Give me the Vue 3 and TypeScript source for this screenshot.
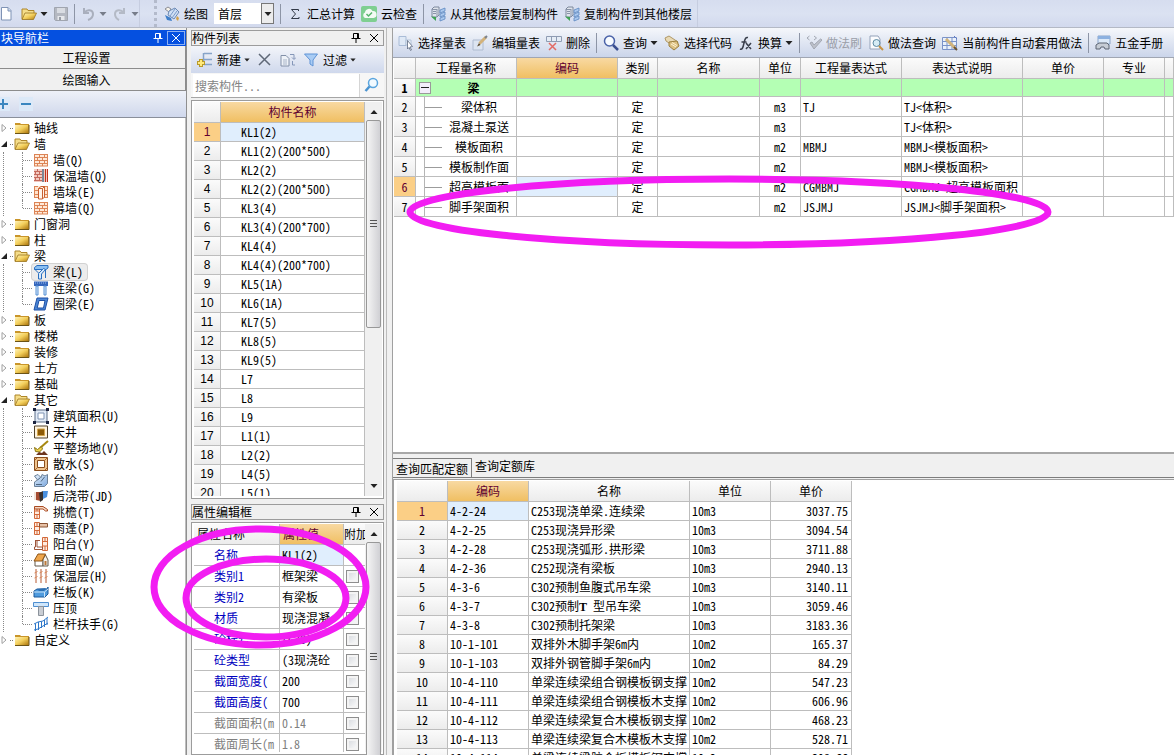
<script setup lang="ts">
import { ref } from 'vue'

interface TreeLeaf { label: string; icon: string; selected?: boolean }
interface TreeGroup { label: string; open?: boolean; children?: TreeLeaf[] }
interface QuantityRow { name: string; kind: string; unit: string; expr: string; note: string; active?: boolean }
interface PropertyRow { name: string; value: string; check: boolean; tone?: string; active?: boolean }

const floor = ref('首层')
const keyword = ref('')

const tree: TreeGroup[] = [
  { label: '轴线' },
  {
    label: '墙', open: true, children: [
      { label: '墙(Q)', icon: 'brick' },
      { label: '保温墙(Q)', icon: 'brick-warm' },
      { label: '墙垛(E)', icon: 'brick-pier' },
      { label: '幕墙(Q)', icon: 'brick' },
    ],
  },
  { label: '门窗洞' },
  { label: '柱' },
  {
    label: '梁', open: true, children: [
      { label: '梁(L)', icon: 'beam', selected: true },
      { label: '连梁(G)', icon: 'beam-link' },
      { label: '圈梁(E)', icon: 'beam-ring' },
    ],
  },
  { label: '板' },
  { label: '楼梯' },
  { label: '装修' },
  { label: '土方' },
  { label: '基础' },
  {
    label: '其它', open: true, children: [
      { label: '建筑面积(U)', icon: 'area' },
      { label: '天井', icon: 'patio' },
      { label: '平整场地(V)', icon: 'shovel' },
      { label: '散水(S)', icon: 'apron' },
      { label: '台阶', icon: 'steps' },
      { label: '后浇带(JD)', icon: 'strip' },
      { label: '挑檐(T)', icon: 'eave' },
      { label: '雨蓬(P)', icon: 'canopy' },
      { label: '阳台(Y)', icon: 'balcony' },
      { label: '屋面(W)', icon: 'roof' },
      { label: '保温层(H)', icon: 'insulate' },
      { label: '栏板(K)', icon: 'panel' },
      { label: '压顶', icon: 'coping' },
      { label: '栏杆扶手(G)', icon: 'rail' },
    ],
  },
  { label: '自定义' },
]

const members: string[] = [
  'KL1(2)', 'KL1(2)(200*500)', 'KL2(2)', 'KL2(2)(200*500)', 'KL3(4)', 'KL3(4)(200*700)', 'KL4(4)',
  'KL4(4)(200*700)', 'KL5(1A)', 'KL6(1A)', 'KL7(5)', 'KL8(5)', 'KL9(5)', 'L7', 'L8', 'L9', 'L1(1)',
  'L2(2)', 'L4(5)', 'L5(1)',
]

const properties: PropertyRow[] = [
  { name: '名称', value: 'KL1(2)', check: false, active: true },
  { name: '类别1', value: '框架梁', check: true },
  { name: '类别2', value: '有梁板', check: true },
  { name: '材质', value: '现浇混凝', check: true },
  { name: '砼标号', value: '(C30)', check: true },
  { name: '砼类型', value: '(3现浇砼', check: true },
  { name: '截面宽度(', value: '200', check: true },
  { name: '截面高度(', value: '700', check: true },
  { name: '截面面积(m', value: '0.14', check: true, tone: 'muted' },
  { name: '截面周长(m', value: '1.8', check: true, tone: 'muted' },
]

const quantities: QuantityRow[] = [
  { name: '梁体积', kind: '定', unit: 'm3', expr: 'TJ', note: 'TJ<体积>' },
  { name: '混凝土泵送', kind: '定', unit: 'm3', expr: '', note: 'TJ<体积>' },
  { name: '模板面积', kind: '定', unit: 'm2', expr: 'MBMJ', note: 'MBMJ<模板面积>' },
  { name: '模板制作面', kind: '定', unit: 'm2', expr: '', note: 'MBMJ<模板面积>' },
  { name: '超高模板面', kind: '定', unit: 'm2', expr: 'CGMBMJ', note: 'CGMBMJ<超高模板面积', active: true },
  { name: '脚手架面积', kind: '定', unit: 'm2', expr: 'JSJMJ', note: 'JSJMJ<脚手架面积>' },
]

const quotas: string[][] = [
  ['4-2-24', 'C253现浇单梁.连续梁', '10m3', '3037.75'],
  ['4-2-25', 'C253现浇异形梁', '10m3', '3094.54'],
  ['4-2-28', 'C253现浇弧形.拱形梁', '10m3', '3711.88'],
  ['4-2-36', 'C252现浇有梁板', '10m3', '2940.13'],
  ['4-3-6', 'C302预制鱼腹式吊车梁', '10m3', '3140.11'],
  ['4-3-7', 'C302预制T 型吊车梁', '10m3', '3059.46'],
  ['4-3-8', 'C302预制托架梁', '10m3', '3183.36'],
  ['10-1-101', '双排外木脚手架6m内', '10m2', '165.37'],
  ['10-1-103', '双排外钢管脚手架6m内', '10m2', '84.29'],
  ['10-4-110', '单梁连续梁组合钢模板钢支撑', '10m2', '547.23'],
  ['10-4-111', '单梁连续梁组合钢模板木支撑', '10m2', '606.96'],
  ['10-4-112', '单梁连续梁复合木模板钢支撑', '10m2', '468.23'],
  ['10-4-113', '单梁连续梁复合木模板木支撑', '10m2', '528.71'],
  ['10-4-114', '单梁连续梁胶合板模板钢支撑', '10m2', '398.66'],
]

const splitSection = (text: string): string[] => text.split(/(T)/)
</script>

<template>
  <div class="app">
    <svg class="symbols" aria-hidden="true">
      <defs>
        <linearGradient id="gFolder" x1="0" y1="0" x2="1" y2="1">
          <stop offset="0" stop-color="#fff3b8" /><stop offset=".5" stop-color="#f3cf5c" /><stop offset="1" stop-color="#b07a10" />
        </linearGradient>
        <linearGradient id="gBlue" x1="0" y1="0" x2="1" y2="1">
          <stop offset="0" stop-color="#e6f1fc" /><stop offset="1" stop-color="#7aa6dc" />
        </linearGradient>
      </defs>
      <symbol id="i-folder" viewBox="0 0 16 16">
        <path d="M1 4V3h5l1 1h8v9.500H1z" fill="#c9952a" /><path d="M1 5h13v8H1z" fill="url(#gFolder)" /><path d="M1 13.500h14V5" fill="none" stroke="#6b5316" />
      </symbol>
      <symbol id="i-folder-open" viewBox="0 0 16 16">
        <path d="M1 13V3h5l1 1.500h6V7" fill="#f5dd8a" stroke="#ae8628" /><path d="M1 13.500L4 7h11.500l-3 6.500z" fill="url(#gFolder)" stroke="#9a741c" stroke-width=".8" />
      </symbol>
      <symbol id="i-brick" viewBox="0 0 16 16">
        <path d="M1 2h14v12H1z" fill="#ffe9d8" /><path d="M1 2.500h14M1 5.500h14M1 8.500h14M1 11.500h14M1 14h14M1.500 2v12M6.500 2v3.500M11.500 2v3.500M4.500 5.500v3M9.500 5.500v3M6.500 8.500v3M11.500 8.500v3M4.500 11.500V14M9.500 11.500V14M14.500 2v12" stroke="#dc8455" fill="none" />
      </symbol>
      <symbol id="i-brick-warm" viewBox="0 0 16 16">
        <path d="M1 1h14v13H1z" fill="#f3c9c0" /><path d="M1 3.500h8M1 6.500h8M1 9.500h8M1 12.500h8M4.500 1v2.500M2.500 4v2M6.500 4v2M4.500 7v2M2.500 10v2M6.500 10v2" stroke="#c46a5c" /><path d="M10 1v13" stroke="#7c8796" stroke-width="2" /><path d="M12.500 1v13M14.500 1v13" stroke="#c2331c" />
      </symbol>
      <symbol id="i-brick-pier" viewBox="0 0 16 16">
        <path d="M1 2h14v12H1z" fill="#ffe3cd" /><path d="M1 2.500h4M1 6.500h4M1 10.500h4M1 13.500h4M11 2.500h4M11 6.500h4M11 10.500h4M11 13.500h4M1.500 2v12M14.500 2v12" stroke="#dc8455" /><path d="M5.500 4.500L8 2.500h3.500V13l-2 2h-4zM5.500 4.500h4V15M9.500 4.500l2-2" fill="#fff4ea" stroke="#c96030" />
      </symbol>
      <symbol id="i-beam" viewBox="0 0 16 16">
        <path d="M1.500 3.500L4 1.500h11V4l-2 1.500H1.500z" fill="#8cc0f2" stroke="#2a6fc0" /><path d="M5.500 9.500l5-5 2 1-4 4.500v5h-3z" fill="#d7eafc" stroke="#2a6fc0" /><path d="M2 5.500L5.500 9M12.500 5.500V14" fill="none" stroke="#2a6fc0" />
      </symbol>
      <symbol id="i-beam-link" viewBox="0 0 16 16">
        <path d="M1 1.500h14V6H1z" fill="#3567bd" /><path d="M2 3h12" stroke="#9dbce8" stroke-dasharray="1 1" /><path d="M3 6h2v9H3zM11 6h2v9h-2z" fill="#dcebfb" stroke="#5590d4" />
      </symbol>
      <symbol id="i-beam-ring" viewBox="0 0 16 16">
        <path d="M4 2h11l-3 12H1z" fill="#4b86d6" stroke="#1d4fa5" /><path d="M6 4.500h6L10.500 12H4.200z" fill="#fff" stroke="#1d4fa5" />
      </symbol>
      <symbol id="i-area" viewBox="0 0 16 16">
        <path d="M2 2h12v12H2z" fill="#e2ebf7" stroke="#5a6c86" /><path d="M5 5h6v6H5z" fill="#fff" stroke="#7e93b3" /><path d="M0 0h3v3H0zM13 0h3v3h-3zM0 13h3v3H0zM13 13h3v3h-3z" fill="#1c2440" />
      </symbol>
      <symbol id="i-patio" viewBox="0 0 16 16">
        <path d="M1.500 2h13v12h-13z" fill="#fff3dc" stroke="#51422c" /><path d="M4.500 5h7v6.500h-7z" fill="#8d5a05" stroke="#d5a64c" />
      </symbol>
      <symbol id="i-shovel" viewBox="0 0 16 16">
        <path d="M15 1L7 8" stroke="#a88810" stroke-width="2" /><path d="M1.500 7.500l3 2 4-3 1 2.500-3 3-4-.500z" fill="#efd24c" stroke="#8a7414" /><path d="M3 15l3-3 3 1 2-2 4 4z" fill="#6d3620" />
      </symbol>
      <symbol id="i-apron" viewBox="0 0 16 16">
        <path d="M1.500 1.500h13v13h-13z" fill="#f0c48f" stroke="#8a4e1d" /><path d="M4.500 4.500h7v7h-7z" fill="#fff" stroke="#8a4e1d" /><path d="M2 4l2-2M2 14l3-3M11 5l3-3M12 14l2-2" stroke="#a86530" />
      </symbol>
      <symbol id="i-steps" viewBox="0 0 16 16">
        <path d="M1.500 14.500V10l3-2-3-4L5 2.500l3 3 1-3 3 1.500 2.500-1.500v9l-3 3z" fill="url(#gBlue)" stroke="#6b8199" /><path d="M4.500 8l3-2.500M8 9.500l3.500-4.500M3 12.500h6" fill="none" stroke="#4f6780" />
      </symbol>
      <symbol id="i-strip" viewBox="0 0 16 16">
        <path d="M1 4h4v8H1z" fill="#f0e3da" /><path d="M3 4h5v9l-5-1z" fill="#a64c32" /><path d="M6 5l4-2v9l-3 2z" fill="#38312f" /><path d="M10 3h5l-1 6-4 2z" fill="#4a90df" />
      </symbol>
      <symbol id="i-eave" viewBox="0 0 16 16">
        <path d="M1.500 3.500h5v11h-5zM1.500 7h5M1.500 10.500h5M4 3.500V7M4 10.500v4" fill="#ffece0" stroke="#d2693a" /><path d="M1.500 2.500H10l4.500 3V7h-2l-2.500-2H1.500z" fill="#f7d9c4" stroke="#a94a22" />
      </symbol>
      <symbol id="i-canopy" viewBox="0 0 16 16">
        <path d="M1.500 2.500h5v12h-5zM1.500 6.500h5M1.500 10.500h5M4 2.500v4M4 10.500v4" fill="#ffece0" stroke="#d2693a" /><path d="M6.500 3.500h8V7h-8z" fill="#e7c1a6" stroke="#8b5434" />
      </symbol>
      <symbol id="i-balcony" viewBox="0 0 16 16">
        <path d="M9.500 1.500h5v13h-5zM9.500 5.500h5M9.500 10h5M12 1.500v4M12 10v4" fill="#ffece0" stroke="#d2693a" /><path d="M2 4.500h5M2.500 4v7H1.500v2.500h8V11H4V5" fill="#fff" stroke="#9d553a" />
      </symbol>
      <symbol id="i-roof" viewBox="0 0 16 16">
        <path d="M2 8v6h8V8z" fill="#fff" stroke="#62584a" /><path d="M10 14V7l2.500-4L15 8v6z" fill="#f5f1ea" stroke="#62584a" /><path d="M1 9l4-7h7.500L9 9z" fill="#efa64c" stroke="#8e5416" /><path d="M11.500 9h2v4h-2z" fill="#b9773b" />
      </symbol>
      <symbol id="i-insulate" viewBox="0 0 16 16">
        <path d="M3 1v14M8 1v14M13 1v14" stroke="#b85a32" /><path d="M1.500 5l3-1.500M1.500 10l3-1.500M6.500 5l3-1.500M6.500 10l3-1.500M11.500 5l3-1.500M11.500 10l3-1.500" stroke="#d98c5f" />
      </symbol>
      <symbol id="i-panel" viewBox="0 0 16 16">
        <path d="M1 7l3-2h10l1-2v7l-3 3H1z" fill="#4f9bde" stroke="#1d5b9c" /><path d="M1 8h10.500V13M11.500 8L15 5" fill="none" stroke="#cbe4f8" /><path d="M4 5l2 2h5l2-3" fill="#2d6fb2" />
      </symbol>
      <symbol id="i-coping" viewBox="0 0 16 16">
        <path d="M.500 2.500h15v4H.500z" fill="#cfe6fb" stroke="#4f8fd0" /><path d="M5.500 6.500h5v9h-5z" fill="#c9cdd3" stroke="#8b929b" />
      </symbol>
      <symbol id="i-rail" viewBox="0 0 16 16">
        <path d="M1 8l4-2 5-1 5-4M1 14l4-1 5-3 5-3M2.500 7.500V15M5.500 6v8M8.500 5.500V12M11.500 4v7M14 2v7" fill="none" stroke="#2e77c9" />
      </symbol>

      <symbol id="i-new" viewBox="0 0 16 16">
        <path d="M1.500 1.500H8l3 3V14H1.500z" fill="#fff" stroke="#7f93b5" /><path d="M8 1.500V5h3" fill="#cfdcf0" stroke="#7f93b5" />
      </symbol>
      <symbol id="i-save" viewBox="0 0 16 16">
        <path d="M1.500 1.500h13v13h-12l-1-1z" fill="#b4b8c1" stroke="#a0a5af" /><path d="M4 2h8v5H4z" fill="#d9dce2" /><path d="M4.500 10h7v4h-7z" fill="#e6e8ec" /><path d="M6 11h2v3H6z" fill="#989da6" />
      </symbol>
      <symbol id="i-undo" viewBox="0 0 16 16">
        <path d="M4 2v5h5M4.500 6.500C7 3 13 3.500 13 8c0 3-2 5-5 6" fill="none" stroke="#a9afbd" stroke-width="2" />
      </symbol>
      <symbol id="i-redo" viewBox="0 0 16 16">
        <path d="M12 2v5H7M11.500 6.500C9 3 3 3.500 3 8c0 3 2 5 4 6" fill="none" stroke="#b4bac6" stroke-width="2" />
      </symbol>
      <symbol id="i-draw" viewBox="0 0 16 16">
        <path d="M1 3l3-2 3 2-2 3z" fill="#f7f3ea" stroke="#8b8d94" /><path d="M5 5l6-3 4 4-5 7-6-4z" fill="#cfe0f5" stroke="#6b89b5" /><path d="M11 3l-5 7M13 5l-5 7" stroke="#7d9bc9" /><path d="M1 9l2 5 5 1-1-3z" fill="#3f7fca" /><path d="M13 10l2 2-1 3-2-2z" fill="#d2a24a" />
      </symbol>
      <symbol id="i-sum" viewBox="0 0 16 16">
        <path d="M11.500 5V3.500h-7l4 4.500-4 4.500h7.500V11" fill="none" stroke="#333a48" />
      </symbol>
      <symbol id="i-cloud" viewBox="0 0 16 16">
        <rect width="16" height="16" rx="2" fill="#7fcf91" /><path d="M4 12a3 3 0 0 1 0-5.500A4 4 0 0 1 11.500 5 3.500 3.500 0 0 1 12.500 12z" fill="#f4fbf5" /><path d="M5.500 8l2 2 3.500-3.500" fill="none" stroke="#57b46d" stroke-width="1.500" />
      </symbol>
      <symbol id="i-copyfrom" viewBox="0 0 16 16">
        <path d="M2 3l2-2h5v8l-2 2H2z" fill="#dfe4ec" stroke="#7d889c" /><path d="M2 3.500h5M3 5.500h3M3 7.500h3M7 3v8" stroke="#8893a7" /><path d="M1 10.500l5 .500v4z" fill="#3fa354" /><path d="M10 4l5-2v3l-5 2zM10 8l5-2v3l-5 2zM10 12l5-2v3l-5 2z" fill="#aac8ee" stroke="#5d88c0" stroke-width=".8" />
      </symbol>
      <symbol id="i-pick" viewBox="0 0 16 16">
        <path d="M1 1.500h7v9H1z" fill="#dfe9f6" stroke="#a9bcd7" /><path d="M8 5h5v5H8z" fill="#edf3fa" stroke="#b4c4da" /><path d="M9.500 5.500l5 6-2.500.500 1.500 3-1 .500-1.500-3-1.500 1.500z" fill="#fff" stroke="#5d6a80" stroke-width=".8" />
      </symbol>
      <symbol id="i-edit" viewBox="0 0 16 16">
        <path d="M1 5h10v10H1z" fill="#dde5f1" stroke="#aebbd0" /><path d="M14 2L7.500 8.500" stroke="#d3b27a" stroke-width="3" /><path d="M15 1l-2 2" stroke="#7a828f" stroke-width="2" /><path d="M7 8L5 11.500 8.500 10z" fill="#5b4a2e" />
      </symbol>
      <symbol id="i-delrow" viewBox="0 0 16 16">
        <path d="M.500 1.500h15v5H.500zM5.500 1.500v5M10.500 1.500v5" fill="#e6edf6" stroke="#8f9cb3" /><path d="M3 8l7 7M10 8l-7 7" stroke="#e26a64" stroke-width="1.500" />
      </symbol>
      <symbol id="i-find" viewBox="0 0 16 16">
        <circle cx="6.500" cy="6" r="5" fill="#f7fbff" stroke="#4a62a8" stroke-width="1.500" /><path d="M10 10l5 5" stroke="#3b4f8f" stroke-width="2.500" />
      </symbol>
      <symbol id="i-code" viewBox="0 0 16 16">
        <path d="M1 3l4-2 9 6-3 5L2 6z" fill="#e8d9b4" stroke="#b09868" /><path d="M5 7l8-1 2 5-5 4-5-4z" fill="#dcc084" stroke="#9c803f" /><path d="M7 9l5 3M8 7.500l5 3" stroke="#fff3d2" />
      </symbol>
      <symbol id="i-fx" viewBox="0 0 16 16">
        <path d="M2 14c2 1 3-1 4-6s2-6 4-5.500M3.500 7h5M8 8l5 6M13 8l-5 6" fill="none" stroke="#3a3f4c" stroke-width="1.500" />
      </symbol>
      <symbol id="i-brush" viewBox="0 0 16 16">
        <path d="M3.500 1L1 3l2.500 2M8 1l2.500 2L8 5" fill="none" stroke="#a2a7b2" /><path d="M4 8l4 6 8-9-1.500-1L8 10 6 7z" fill="#bdc1ca" stroke="#a2a7b2" />
      </symbol>
      <symbol id="i-pagefind" viewBox="0 0 16 16">
        <path d="M2 1h8l2 3v10H2z" fill="#fbfcfe" stroke="#94a2b9" /><circle cx="8.500" cy="8" r="3.500" fill="#d6ecf5" stroke="#5d8ba3" /><path d="M11 11l4 4" stroke="#c79243" stroke-width="2" />
      </symbol>
      <symbol id="i-auto" viewBox="0 0 16 16">
        <path d="M.500 2.500h14v12H.500zM.500 6.500h14M.500 10.500h14M5 2.500v12M10 2.500v12" fill="#eaf1fb" stroke="#7b93c8" /><path d="M4 4l9 9" stroke="#d2b47c" stroke-width="3" /><path d="M12 12l3 3" stroke="#6b5433" stroke-width="2" /><path d="M12 1l3 3" stroke="#5c78c4" />
      </symbol>
      <symbol id="i-manual" viewBox="0 0 16 16">
        <path d="M3 1h12v8H3z" fill="#dce9f8" stroke="#8aa4c9" /><path d="M3 1h12v3H3z" fill="#8db1e0" /><path d="M1 10l3-2h8l2 2v4h-4l-1-2H6l-1 2H1z" fill="#c6ccd5" stroke="#5c6573" />
      </symbol>
      <symbol id="i-addrow" viewBox="0 0 16 16">
        <path d="M7 1.500h8M7 7.500h8M7 12.500h8M6.500 1v11" stroke="#86a3c8" stroke-width="1.500" fill="none" /><path d="M4 7v8M0 11h8" stroke="#b89a2c" stroke-width="4" /><path d="M4 8v6M1 11h6" stroke="#ffe97a" stroke-width="2" />
      </symbol>
      <symbol id="i-cross" viewBox="0 0 16 16">
        <path d="M2 2l11 11M13 2L2 13" stroke="#5f6877" stroke-width="1.500" />
      </symbol>
      <symbol id="i-copy" viewBox="0 0 16 16">
        <path d="M1 3.500h5l3 3V14H1z" fill="#eef2f8" stroke="#8290a8" /><path d="M3 8h4M3 10h4M3 12h4" stroke="#a9b5c8" /><path d="M10 2.500h4V7M12.500 9v4H15M12 5.500l2 2 2-2" fill="none" stroke="#8496b8" />
      </symbol>
      <symbol id="i-filter" viewBox="0 0 16 16">
        <path d="M1.500 2h13L10 8v6l-3-2V8z" fill="#a9ccf4" stroke="#5f93d6" />
      </symbol>
      <symbol id="i-lens" viewBox="0 0 16 16">
        <circle cx="9" cy="6" r="4.500" fill="#f2faff" stroke="#5aa5de" stroke-width="1.500" /><path d="M5.500 9.500L1.500 14" stroke="#4a93d0" stroke-width="2.500" />
      </symbol>
      <symbol id="i-pin" viewBox="0 0 12 12">
        <path d="M3.500 1.500h5v5h-5zM7.500 1.500v5M1.500 6.500h9M6 7v4" fill="none" stroke="currentColor" />
      </symbol>
      <symbol id="i-close" viewBox="0 0 12 12">
        <path d="M2 2l8 8M10 2l-8 8" fill="none" stroke="currentColor" />
      </symbol>
      <symbol id="i-down" viewBox="0 0 8 8"><path d="M.500 2h7L4 6z" fill="currentColor" /></symbol>
      <symbol id="i-up" viewBox="0 0 8 8"><path d="M.500 6h7L4 2z" fill="currentColor" /></symbol>
    </svg>

    <header class="mainbar">
      <div class="group first">
        <button class="tool" aria-label="新建文件"><svg class="ico"><use href="#i-new" /></svg></button>
        <button class="tool" aria-label="打开"><svg class="ico"><use href="#i-folder-open" /></svg><svg class="caret"><use href="#i-down" /></svg></button>
        <button class="tool" aria-label="保存"><svg class="ico"><use href="#i-save" /></svg></button>
        <i class="sep"></i>
        <button class="tool dim" aria-label="撤销"><svg class="ico"><use href="#i-undo" /></svg><svg class="caret"><use href="#i-down" /></svg></button>
        <button class="tool dim" aria-label="恢复"><svg class="ico"><use href="#i-redo" /></svg><svg class="caret"><use href="#i-down" /></svg></button>
      </div>
      <div class="group second">
        <button class="tool"><svg class="ico"><use href="#i-draw" /></svg>绘图</button>
        <label class="floor">
          <select v-model="floor" aria-label="楼层"><option>首层</option></select>
          <span class="drop"><svg class="caret"><use href="#i-down" /></svg></span>
        </label>
        <i class="sep"></i>
        <button class="tool"><svg class="ico"><use href="#i-sum" /></svg>汇总计算</button>
        <button class="tool"><svg class="ico"><use href="#i-cloud" /></svg>云检查</button>
        <i class="sep"></i>
        <button class="tool"><svg class="ico"><use href="#i-copyfrom" /></svg>从其他楼层复制构件</button>
        <button class="tool"><svg class="ico"><use href="#i-copyfrom" /></svg>复制构件到其他楼层</button>
      </div>
    </header>

    <main class="workspace">
      <aside class="nav">
        <div class="caption active">
          <h2>块导航栏</h2>
          <button class="cap" aria-label="固定"><svg><use href="#i-pin" /></svg></button>
          <button class="cap boxed" aria-label="关闭"><svg><use href="#i-close" /></svg></button>
        </div>
        <button class="section">工程设置</button>
        <button class="section">绘图输入</button>
        <div class="navtools">
          <button aria-label="全部展开"><i class="plus"></i></button>
          <button aria-label="全部折叠"><i class="minus"></i></button>
        </div>
        <ul class="tree">
          <li v-for="group in tree" :key="group.label">
            <div class="node">
              <svg v-if="group.open" class="twist" viewBox="0 0 8 8"><path d="M7 1v6H1z" fill="#222" /></svg>
              <svg v-else class="twist" viewBox="0 0 8 8"><path d="M2 .500L6 4 2 7.500z" fill="#fff" stroke="#a0a0a0" /></svg>
              <i class="stub"></i>
              <svg class="ico"><use :href="group.open ? '#i-folder-open' : '#i-folder'" /></svg>
              <span>{{ group.label }}</span>
            </div>
            <ul v-if="group.children" class="leaves">
              <li v-for="leaf in group.children" :key="leaf.label" class="leaf">
                <i class="elbow"></i>
                <span class="pick" :class="{ selected: leaf.selected }">
                  <svg class="ico"><use :href="'#i-' + leaf.icon" /></svg>{{ leaf.label }}
                </span>
              </li>
            </ul>
          </li>
        </ul>
      </aside>

      <div class="middle">
        <section class="panel">
          <div class="caption">
            <h2>构件列表</h2>
            <button class="cap" aria-label="固定"><svg><use href="#i-pin" /></svg></button>
            <button class="cap" aria-label="关闭"><svg><use href="#i-close" /></svg></button>
          </div>
          <div class="listbar">
            <button class="tool"><svg class="ico"><use href="#i-addrow" /></svg>新建<svg class="caret small"><use href="#i-down" /></svg></button>
            <button class="tool" aria-label="删除构件"><svg class="ico"><use href="#i-cross" /></svg></button>
            <button class="tool" aria-label="复制构件"><svg class="ico"><use href="#i-copy" /></svg></button>
            <button class="tool"><svg class="ico"><use href="#i-filter" /></svg>过滤<svg class="caret small"><use href="#i-down" /></svg></button>
          </div>
          <div class="search">
            <input v-model="keyword" type="text" placeholder="搜索构件..." aria-label="搜索构件">
            <button aria-label="搜索"><svg class="ico"><use href="#i-lens" /></svg></button>
          </div>
          <div class="gridbox">
            <div class="clip">
              <table class="grid members">
                <colgroup><col class="w27"><col></colgroup>
                <thead><tr><th></th><th class="hot">构件名称</th></tr></thead>
                <tbody>
                  <tr v-for="(member, i) in members" :key="member" :class="{ current: i === 0 }">
                    <th>{{ i + 1 }}</th><td :class="{ cell: i === 0 }">{{ member }}</td>
                  </tr>
                </tbody>
              </table>
            </div>
            <div class="scroll">
              <svg class="caret"><use href="#i-up" /></svg>
              <div class="track"><div class="thumb long"><i class="grip"></i></div></div>
              <svg class="caret"><use href="#i-down" /></svg>
            </div>
          </div>
        </section>

        <section class="panel">
          <div class="caption">
            <h2>属性编辑框</h2>
            <button class="cap" aria-label="固定"><svg><use href="#i-pin" /></svg></button>
            <button class="cap" aria-label="关闭"><svg><use href="#i-close" /></svg></button>
          </div>
          <div class="gridbox props-box">
            <div class="clip">
              <table class="grid props">
                <colgroup><col><col class="w64"><col class="w22"></colgroup>
                <thead><tr><th class="left">属性名称</th><th class="hot left">属性值</th><th>附加</th></tr></thead>
                <tbody>
                  <tr v-for="row in properties" :key="row.name" :class="row.tone">
                    <td class="pname">{{ row.name }}</td>
                    <td :class="{ cell: row.active }">{{ row.value }}</td>
                    <td class="tick"><input v-if="row.check" type="checkbox" :aria-label="row.name"></td>
                  </tr>
                </tbody>
              </table>
            </div>
            <div class="scroll">
              <svg class="caret"><use href="#i-up" /></svg>
              <div class="track"><div class="thumb full"><i class="grip"></i></div></div>
            </div>
          </div>
        </section>
      </div>

      <div class="right">
        <section class="upper">
          <div class="quantbar">
            <button class="tool"><svg class="ico"><use href="#i-pick" /></svg>选择量表</button>
            <button class="tool"><svg class="ico"><use href="#i-edit" /></svg>编辑量表</button>
            <button class="tool"><svg class="ico"><use href="#i-delrow" /></svg>删除</button>
            <i class="sep"></i>
            <button class="tool"><svg class="ico"><use href="#i-find" /></svg>查询<svg class="caret"><use href="#i-down" /></svg></button>
            <button class="tool"><svg class="ico"><use href="#i-code" /></svg>选择代码</button>
            <button class="tool"><svg class="ico"><use href="#i-fx" /></svg>换算<svg class="caret"><use href="#i-down" /></svg></button>
            <i class="sep"></i>
            <button class="tool off" disabled><svg class="ico"><use href="#i-brush" /></svg>做法刷</button>
            <button class="tool"><svg class="ico"><use href="#i-pagefind" /></svg>做法查询</button>
            <button class="tool"><svg class="ico"><use href="#i-auto" /></svg>当前构件自动套用做法</button>
            <i class="sep"></i>
            <button class="tool"><svg class="ico"><use href="#i-manual" /></svg>五金手册</button>
          </div>
          <div class="quantbox">
            <table class="grid quant">
              <colgroup>
                <col class="w22"><col class="w101"><col class="w101"><col class="w40"><col class="w102"><col class="w41">
                <col class="w101"><col class="w121"><col class="w81"><col class="w61"><col>
              </colgroup>
              <thead>
                <tr>
                  <th></th><th>工程量名称</th><th class="hot">编码</th><th>类别</th><th>名称</th><th>单位</th>
                  <th>工程量表达式</th><th>表达式说明</th><th>单价</th><th>专业</th><th></th>
                </tr>
              </thead>
              <tbody>
                <tr class="total">
                  <th>1</th>
                  <td><div class="branch"><i class="fold"></i><span>梁</span></div></td>
                  <td v-for="n in 9" :key="n"></td>
                </tr>
                <tr v-for="(row, i) in quantities" :key="row.name" :class="{ current: row.active }">
                  <th>{{ i + 2 }}</th>
                  <td><div class="branch"><i class="limb"></i><span>{{ row.name }}</span></div></td>
                  <td :class="{ cell: row.active }"></td>
                  <td class="mid">{{ row.kind }}</td>
                  <td></td>
                  <td class="mid">{{ row.unit }}</td>
                  <td>{{ row.expr }}</td>
                  <td>{{ row.note }}</td>
                  <td></td><td></td><td></td>
                </tr>
              </tbody>
            </table>
          </div>
        </section>

        <section class="lower">
          <div class="tabs" role="tablist">
            <button role="tab" aria-selected="true" class="tab on">查询匹配定额</button>
            <button role="tab" aria-selected="false" class="tab">查询定额库</button>
          </div>
          <div class="quotabox">
            <table class="grid quota">
              <colgroup><col class="w51"><col class="w81"><col class="w161"><col class="w81"><col class="w81"></colgroup>
              <thead><tr><th></th><th class="hot">编码</th><th>名称</th><th>单位</th><th>单价</th></tr></thead>
              <tbody>
                <tr v-for="(row, i) in quotas" :key="row[0]" :class="{ current: i === 0 }">
                  <th>{{ i + 1 }}</th>
                  <td :class="{ cell: i === 0 }">{{ row[0] }}</td>
                  <td><span v-for="(part, p) in splitSection(row[1])" :key="p" :class="{ letter: part === 'T' }">{{ part }}</span></td>
                  <td>{{ row[2] }}</td>
                  <td class="num">{{ row[3] }}</td>
                </tr>
              </tbody>
            </table>
          </div>
        </section>
      </div>
    </main>

    <svg class="marks" aria-hidden="true">
      <ellipse cx="729" cy="212" rx="319" ry="33" />
      <ellipse cx="260" cy="587" rx="106" ry="58" />
      <ellipse cx="266" cy="598" rx="80" ry="39" />
    </svg>
  </div>
</template>

<style>
html,
body {
  margin: 0;
  height: 100%;
  overflow: hidden;
}
</style>

<style scoped>
.app {
  position: relative;
  display: flex;
  flex-direction: column;
  height: 100vh;
  overflow: hidden;
  background: #f0f0f0;
  color: #000;
  font: 12px/16px "Noto Sans Mono CJK SC", "Noto Sans CJK SC", sans-serif;
}
.app * { box-sizing: border-box; }
.symbols { position: absolute; width: 0; height: 0; }
button, input, select { font: inherit; color: inherit; margin: 0; padding: 0; }
button { border: 0; background: none; white-space: nowrap; }
h2 { margin: 0; font: inherit; }
ul { list-style: none; margin: 0; padding: 0; }
.ico { width: 16px; height: 16px; flex: none; display: block; }
.caret { width: 8px; height: 8px; flex: none; display: block; color: #222; }
.caret.small { width: 6px; height: 6px; }
.tool { display: flex; align-items: center; gap: 4px; flex: none; }
.tool .caret { margin-left: -1px; }
.tool.dim .caret { color: #777d8a; }
.tool.off { color: #9a9ea8; }
.sep { flex: none; width: 1px; height: 20px; background: #8d95a6; }

.mainbar {
  flex: none;
  display: flex;
  height: 28px;
  border-bottom: 1px solid #b4b9c5;
  background: linear-gradient(#d6ddef, #dbe2f2 50%, #d2d9ed);
}
.group { display: flex; align-items: center; gap: 6px; }
.group.first { gap: 5px; border-right: 1px solid #c6cde0; }
.group.second { margin-left: 14px; padding: 0 5px 0 7px; border-left: 3px dotted #b3bacb; border-right: 1px solid #c6cde0; }
.floor { display: flex; width: 60px; height: 21px; background: #fff; }
.floor select { flex: 1; min-width: 0; appearance: none; border: 0; padding-left: 4px; background: #fff; }
.drop { flex: none; width: 13px; display: flex; align-items: center; justify-content: center; border: 1px solid #777; background: #ececec; }

.workspace { flex: 1; min-height: 0; display: flex; }
.nav { flex: 0 0 187px; display: flex; flex-direction: column; padding-top: 2px; border-right: 1px solid #8f8f8f; }
.caption { flex: none; display: flex; align-items: center; height: 16px; border: 1px solid #9c9c9c; background: #f0f0f0; }
.caption h2 { flex: 1; line-height: 14px; }
.caption.active { border-color: #0550e0; background: #0550e0; color: #fff; }
.cap { flex: none; width: 18px; height: 14px; display: flex; align-items: center; justify-content: center; }
.cap svg { width: 12px; height: 12px; }
.cap.boxed { border: 1px solid #8db0f2; }
.section { flex: none; height: 22px; padding: 1px 12px 0 0; border: solid #8c8c8c; border-width: 0 1px 1px 0; background: #f0f0f0; }
.section:first-of-type { height: 23px; padding-top: 2px; }
.navtools { flex: none; display: flex; align-items: center; gap: 9px; height: 27px; background: linear-gradient(#eef1f8, #d0d8ec); border-bottom: 1px solid #8a8f9a; }
.navtools button { width: 14px; height: 14px; margin-left: -4px; display: flex; align-items: center; justify-content: center; background: #dce9f8; }
.navtools button + button { margin-left: 0; }
.plus, .minus { display: block; width: 10px; height: 2px; background: #3a87c0; }
.plus { height: 10px; background: linear-gradient(#3a87c0, #3a87c0) center / 10px 2px no-repeat, linear-gradient(#3a87c0, #3a87c0) center / 2px 10px no-repeat; }

.tree { flex: 1; min-height: 0; overflow: hidden; padding-top: 2px; background: #fff; border-right: 1px solid #bdbdbd; }
.node { display: flex; align-items: center; height: 16px; }
.node span { margin-left: 4px; }
.twist { flex: none; width: 8px; height: 8px; }
.stub { flex: none; width: 3px; margin: 0 1px 0 2px; border-top: 1px dotted #777; }
.leaves { margin-left: 3px; padding-left: 18px; border-left: 1px dotted #888; }
.leaf { display: flex; height: 16px; }
.elbow { flex: none; width: 10px; border-left: 1px dotted #888; }
.elbow::before { content: ""; display: block; height: 8px; border-bottom: 1px dotted #888; }
.leaf:last-child .elbow { height: 8px; }
.pick { display: flex; align-items: center; gap: 4px; height: 16px; padding: 0 4px 0 1px; }
.pick.selected { border-radius: 3px; background: #ececec; box-shadow: 0 0 0 1px #d2d2d2; }

.middle { flex: 0 0 200px; display: grid; grid-template-rows: minmax(0, 469fr) minmax(0, 251fr); gap: 5px; padding: 2px 2px 0 4px; border-right: 1px solid #bcbcbc; }
.panel { display: flex; flex-direction: column; min-height: 0; }
.listbar { flex: none; display: flex; align-items: center; gap: 7px; height: 27px; padding-left: 6px; background: linear-gradient(#f3f5fa, #cfd8ec); }
.listbar .tool { gap: 4px; }
.search { flex: none; display: flex; align-items: center; height: 25px; margin-bottom: 2px; padding: 0 0 0 2px; border-bottom: 1px solid #a5a5a5; background: #f6f6f6; }
.search input { flex: 1; min-width: 0; height: 23px; border: 0; border-right: 1px solid #d5d5d5; padding-left: 2px; background: #fff; outline: 0; }
.search input::placeholder { color: #848484; opacity: 1; }
.search button { flex: none; width: 24px; display: flex; justify-content: center; }
.gridbox { flex: 1; min-height: 0; display: flex; padding: 1px 1px 2px 2px; border: 1px solid #9c9c9c; background: #fff; }
.props-box { margin-top: 2px; }
.clip { flex: 1; min-width: 0; overflow: hidden; }
.scroll { flex: none; width: 17px; display: flex; flex-direction: column; align-items: center; gap: 4px; padding: 6px 0; background: #f0f0f0; }
.props-box .clip { margin-right: -1px; }
.props-box .scroll { width: 17px; }
.track { flex: 1; width: 100%; min-height: 0; }
.thumb { display: flex; align-items: center; justify-content: center; margin: 0 1px; border: 1px solid #989898; border-radius: 2px; background: linear-gradient(90deg, #f5f5f5, #d0d0d4); }
.thumb.long { height: 58%; }
.thumb.full { height: 112%; }
.grip { width: 7px; height: 7px; background: repeating-linear-gradient(#555 0 1px, transparent 1px 3px); }

.grid { table-layout: fixed; width: 100%; border-spacing: 0; border-collapse: separate; }
.grid th, .grid td { height: 19px; padding: 0; border: solid #bdbdbd; border-width: 0 1px 1px 0; line-height: 16px; overflow: hidden; white-space: nowrap; font-weight: 400; text-align: left; }
.grid td { padding-left: 2px; background: #fff; }
.grid th { text-align: center; background: linear-gradient(#fbfbfb, #ececec); }
.grid thead th.hot { color: #600030; background: linear-gradient(#f8d9a2, #f0bf62); }
.grid th.left { text-align: left; padding-left: 3px; }
.grid tr.current > th { color: #600030; background: #fbcf86; }
.grid td.cell { background: #e0eefd; }
.grid td.mid { text-align: center; padding: 0; }
.grid td.num { text-align: right; padding-right: 3px; }
.w22 { width: 22px; } .w27 { width: 27px; } .w40 { width: 40px; } .w41 { width: 41px; }
.w51 { width: 51px; } .w61 { width: 61px; } .w64 { width: 64px; } .w81 { width: 81px; } .w101 { width: 101px; }
.w102 { width: 102px; } .w121 { width: 121px; } .w161 { width: 161px; }

.members thead th { height: 21px; }
.members tbody td { padding-left: 20px; }
.members tbody th { font-family: "Liberation Sans", sans-serif; }
.props th, .props td { height: 21px; }
.props .pname { padding-left: 20px; color: #0000c0; }
.props .muted td { color: #808080; }
.tick input { display: block; appearance: none; width: 13px; height: 13px; border: 1px solid #8e8e8e; background: linear-gradient(135deg, #d4d7dc, #fff); box-shadow: inset 0 0 0 2px #f4f4f4; }

.right { flex: 1; min-width: 0; display: grid; grid-template-rows: minmax(0, 426fr) minmax(0, 301fr); padding-left: 5px; }
.upper { display: flex; flex-direction: column; min-height: 0; min-width: 0; border-left: 1px solid #a0a0a0; border-bottom: 2px solid #a8a8a8; background: #fff; }
.quantbar { flex: none; display: flex; align-items: center; gap: 6px; height: 30px; padding-left: 5px; overflow: hidden; background: linear-gradient(#f5f7fb, #cbd5ea); border-bottom: 1px solid #a0a6b2; }
.quantbox { flex: 1; min-height: 0; overflow: hidden; padding-left: 1px; }
.quant thead th { height: 21px; }
.quant tbody th, .quant tbody td { height: 20px; }
.quant .total th, .quant .total td { height: 18px; font-weight: 700; }
.quant .total td { background: #b4ffb4; }
.branch { display: flex; align-items: center; height: 19px; }
.total .branch { height: 17px; }
.branch span { flex: 1; text-align: center; }
.limb { flex: none; align-self: stretch; width: 18px; margin-left: 6px; border-left: 1px solid #b5b5b5; }
.limb::before { content: ""; display: block; height: 10px; border-bottom: 1px solid #9c9c9c; }
.fold { flex: none; width: 12px; height: 12px; margin-left: 1px; padding: 4px 1px; border: 1px solid #9a9a9a; background: #f2eefa; }
.fold::before { content: ""; display: block; height: 1px; background: #222; }

.lower { display: flex; flex-direction: column; min-height: 0; min-width: 0; border-left: 1px solid #a0a0a0; }
.tabs { flex: none; display: flex; align-items: flex-end; height: 24px; border-bottom: 1px solid #7d7d7d; }
.tab { height: 22px; padding: 0 3px; }
.tab.on { height: 19px; padding-top: 2px; border: solid #7d7d7d; border-width: 1px 1px 0 0; }
.quotabox { flex: 1; min-height: 0; overflow: hidden; margin-top: 1px; padding: 1px 0 0 3px; border: solid #a0a0a0; border-width: 1px 0 0 1px; background: #fff; }
.quota { width: 455px; }
.quota thead th { height: 21px; }
.quota td { white-space: pre; }
.letter { font-family: "Liberation Serif", serif; font-weight: 700; }

.marks { position: absolute; inset: 0; width: 100%; height: 100%; pointer-events: none; }
.marks ellipse { fill: none; stroke: #f21df2; stroke-width: 7px; }
</style>
